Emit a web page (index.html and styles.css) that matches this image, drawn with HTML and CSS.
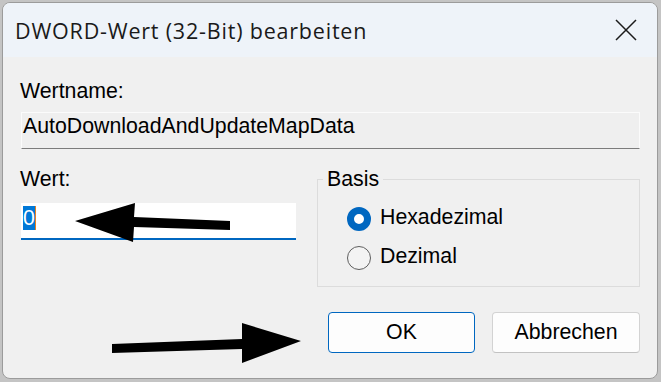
FILE: index.html
```html
<!DOCTYPE html>
<html>
  <head>
    <title>DWORD-Wert (32-Bit) bearbeiten</title>
    <link rel="stylesheet" href="styles.css">
  </head>
  <body>
    <div class="window">
      <div class="titlebar">
        <span class="title">DWORD-Wert (32-Bit) bearbeiten</span>
        <span class="close">
          <svg width="22" height="22" viewBox="0 0 22 22">
            <path d="M1 1L21 21M21 1L1 21" stroke="#1b1b1b" stroke-width="1.5" fill="none"/>
          </svg>
        </span>
      </div>

      <div class="content">
        <div class="label">Wertname:</div>
        <div class="field-readonly">AutoDownloadAndUpdateMapData</div>

        <div class="row">
          <div class="col-value">
            <div class="label">Wert:</div>
            <div class="field-edit"><span class="selected">0</span></div>
          </div>

          <fieldset class="basis">
            <legend>Basis</legend>
            <div class="radio-row">
              <span class="radio checked"></span>
              <span class="radio-label">Hexadezimal</span>
            </div>
            <div class="radio-row">
              <span class="radio"></span>
              <span class="radio-label">Dezimal</span>
            </div>
          </fieldset>
        </div>

        <div class="buttons">
          <button class="btn btn-default">OK</button>
          <button class="btn btn-cancel">Abbrechen</button>
        </div>
      </div>
    </div>

    <!-- annotation arrows drawn over the dialog -->
    <svg class="arrows" width="661" height="382" viewBox="0 0 661 382">
      <polygon points="75,221 135,203 134,217 230,221 230,230 134,227 133,242" fill="#000"/>
      <polygon points="112,344 242,339 242,323 301,341 242,363 242,349 112,353" fill="#000"/>
    </svg>
  </body>
</html>
```

FILE: styles.css
```css
* {
  box-sizing: border-box;
}

body {
  margin: 0;
  width: 661px;
  height: 382px;
  background: #c4c4c4;
  font-family: 'Liberation Sans', Arial, sans-serif;
  font-size: 21.3px;
  color: #000;
  position: relative;
  overflow: hidden;
}

.window {
  margin: 2px 0 0 2px;
  width: 656px;
  height: 377px;
  border: 1px solid #9b9b9b;
  border-radius: 8px;
  background: #f0f0f0;
  overflow: hidden;
  display: flex;
  flex-direction: column;
}

.titlebar {
  height: 54px;
  flex-shrink: 0;
  background: #eef3f9;
  display: flex;
  align-items: center;
  justify-content: space-between;
  padding: 0 20px 0 12px;
}

.title {
  font-family: 'Open Sans', 'Noto Sans', sans-serif;
  font-size: 21.5px;
  letter-spacing: 0.8px;
  color: #1a1a1a;
}

.close {
  display: flex;
}

.content {
  padding: 0 17px 0 18px;
}

.label {
  margin: 22px 0 0 -1px;
  line-height: 24px;
}

.field-readonly {
  margin-top: 9px;
  height: 37px;
  line-height: 26px;
  padding: 0 0 0 1px;
  border: 1px solid #fbfbfb;
  border-bottom: 1px solid #7c7c7c;
  background: #efefef;
}

.row {
  display: grid;
  grid-template-columns: 275px 1fr;
  column-gap: 21px;
  margin-top: 18px;
}

.col-value .label {
  margin-top: 0;
}

.field-edit {
  margin-top: 12px;
  height: 37px;
  padding: 3px 0 0 2px;
  background: #fff;
  border-bottom: 2px solid #0067c0;
}

.selected {
  display: inline-block;
  line-height: 24px;
  color: #fff;
  background: #0078d7;
  border-right: 1px solid #e8801e;
}

.basis {
  margin: 0;
  padding: 8px 0 9px 0;
  min-width: 0;
  border: 1px solid #dcdcdc;
}

.basis legend {
  margin-left: 5px;
  padding: 0 4px;
  line-height: 24px;
}

.radio-row {
  display: flex;
  align-items: center;
  height: 39px;
  margin-left: 29px;
}

.radio {
  width: 24px;
  height: 24px;
  border-radius: 50%;
  border: 1.5px solid #5e5e5e;
  background: #f3f3f3;
  flex-shrink: 0;
}

.radio.checked {
  border: 7.5px solid #0067c0;
  background: #fff;
}

.radio-label {
  margin-left: 9px;
  line-height: 24px;
  padding-bottom: 3px;
}

.buttons {
  display: flex;
  justify-content: flex-end;
  gap: 17px;
  margin-top: 25px;
}

.btn {
  height: 41px;
  font-family: 'Liberation Sans', Arial, sans-serif;
  font-size: 21.3px;
  color: #000;
  background: #fdfdfd;
  border: 1px solid #d3d3d3;
  border-bottom-color: #c2c2c2;
  border-radius: 4px;
  padding: 0;
}

.btn-default {
  width: 147px;
  border-color: #0067c0;
}

.btn-cancel {
  width: 148px;
}

.arrows {
  position: absolute;
  top: 0;
  left: 0;
  pointer-events: none;
}
```
